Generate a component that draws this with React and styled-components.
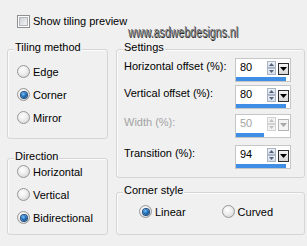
import React from "react";
import styled, { createGlobalStyle, css } from "styled-components";

const Global = createGlobalStyle`
  html, body { margin: 0; padding: 0; background: #f0f0f0; }
  body { font-family: "Liberation Sans", Arial, sans-serif; font-size: 11px; color: #000; }
`;

const Page = styled.div`
  position: relative;
  width: 307px;
  height: 246px;
  box-sizing: border-box;
  padding-top: 15px;
  overflow: hidden;
  background: #f0f0f0;
`;

const CheckRow = styled.label`
  display: flex;
  align-items: center;
  gap: 3px;
  height: 13px;
  padding-left: 17px;
  line-height: 13px;
`;

const CheckBox = styled.span`
  flex: none;
  width: 13px;
  height: 13px;
  box-sizing: border-box;
  border: 1px solid #8e8f8f;
  background: linear-gradient(135deg, #c4c8ce 0%, #e6e8eb 60%, #f7f7f7 100%);
  box-shadow: inset 0 0 0 1px #fff, inset 0 0 0 2px #b1b5bb;
`;

const Watermark = styled.div`
  position: absolute;
  left: 128px;
  top: 25px;
  font-size: 14px;
  line-height: 14px;
  color: #7a7a7a;
  text-shadow: 1px 1px 0 #2a2a2a;
  transform: scaleX(0.76);
  transform-origin: left top;
  white-space: nowrap;
`;

const Columns = styled.div`
  display: flex;
  gap: 8px;
  padding-left: 7px;
  margin-top: 21px;
`;

const Column = styled.div`
  display: flex;
  flex-direction: column;
  width: ${(p) => p.$w}px;
`;

const Group = styled.div`
  position: relative;
  box-sizing: border-box;
  height: ${(p) => p.$h}px;
  margin-top: ${(p) => p.$mt || 0}px;
  padding: ${(p) => p.$pad};
  border: 1px solid #d5d5d5;
  border-radius: 3px;
  box-shadow: inset 1px 1px 0 #fcfcfc;
`;

const GroupTitle = styled.span`
  position: absolute;
  top: -10px;
  left: 6px;
  padding: 0 1px;
  line-height: 14px;
  background: #f0f0f0;
  white-space: nowrap;
`;

const RadioList = styled.div`
  display: flex;
  flex-direction: column;
`;

const RadioRowLine = styled.div`
  display: flex;
  gap: 36px;
`;

const RadioItem = styled.label`
  display: flex;
  align-items: center;
  gap: 3px;
  height: 23px;
  white-space: nowrap;
`;

const RadioDot = styled.span`
  position: relative;
  flex: none;
  width: 13px;
  height: 13px;
  box-sizing: border-box;
  border-radius: 50%;
  border: 1px solid #979797;
  background: radial-gradient(circle at 40% 35%, #ffffff 0%, #ededed 45%, #cbcbcb 100%);
  ${(p) =>
    p.$checked &&
    css`
      &::after {
        content: "";
        position: absolute;
        left: 2.5px;
        top: 2.5px;
        width: 6px;
        height: 6px;
        border-radius: 50%;
        background: radial-gradient(circle at 40% 35%, #7fc4f4 0%, #1f6fbd 45%, #0c3464 100%);
        box-shadow: 0 0 0 1px #24507e;
      }
    `}
`;

const SettingRow = styled.div`
  display: flex;
  align-items: flex-start;
  margin-top: ${(p) => p.$mt}px;
`;

const SettingLabel = styled.span`
  width: 111px;
  line-height: 17px;
  color: ${(p) => (p.$disabled ? "#a3a3a3" : "#000")};
  white-space: nowrap;
`;

const Spin = styled.div`
  display: flex;
  flex-direction: column;
  width: 56px;
  height: 24px;
  box-sizing: border-box;
  border: 1px solid #c6c6c6;
  background: #fff;
`;

const SpinTop = styled.div`
  display: flex;
  height: 17px;
`;

const SpinValue = styled.span`
  width: 31px;
  box-sizing: border-box;
  padding-left: 4px;
  line-height: 17px;
  color: ${(p) => (p.$disabled ? "#a3a3a3" : "#000")};
`;

const Arrows = styled.div`
  display: flex;
  flex-direction: column;
  width: 9px;
  margin-top: 2px;
`;

const ArrowBtn = styled.span`
  display: flex;
  align-items: center;
  justify-content: center;
  height: 7px;
  box-sizing: border-box;
  border: 1px solid ${(p) => (p.$disabled ? "#d2d2d2" : "#aab5c6")};
  background: ${(p) =>
    p.$disabled ? "#f2f2f2" : "linear-gradient(#eef2f7, #d5dce7)"};
`;

const DropBtn = styled.span`
  display: flex;
  align-items: center;
  justify-content: center;
  width: 11px;
  height: 12px;
  margin: 4px 0 0 2px;
  box-sizing: border-box;
  border: 1px solid ${(p) => (p.$disabled ? "#b4b4b4" : "#2e2e2e")};
  background: ${(p) =>
    p.$disabled ? "#f4f4f4" : "linear-gradient(#f6f6f6, #d6d6d6)"};
`;

const BarTrack = styled.div`
  width: 50px;
  height: 4px;
  margin-top: 1px;
`;

const BarFill = styled.div`
  width: ${(p) => p.$fill * 100}%;
  height: 100%;
  background: #3d8ee4;
`;

const Tri = ({ dir, color, w, h }) => (
  <svg width={w} height={h} viewBox={`0 0 ${w} ${h}`}>
    {dir === "up" ? (
      <polygon points={`0,${h} ${w},${h} ${w / 2},0`} fill={color} />
    ) : (
      <polygon points={`0,0 ${w},0 ${w / 2},${h}`} fill={color} />
    )}
  </svg>
);

function SpinControl({ value, fill, disabled }) {
  const arrowColor = disabled ? "#c0c0c0" : "#52607a";
  return (
    <Spin>
      <SpinTop>
        <SpinValue $disabled={disabled}>{value}</SpinValue>
        <Arrows>
          <ArrowBtn $disabled={disabled}>
            <Tri dir="up" color={arrowColor} w={5} h={3} />
          </ArrowBtn>
          <ArrowBtn $disabled={disabled}>
            <Tri dir="down" color={arrowColor} w={5} h={3} />
          </ArrowBtn>
        </Arrows>
        <DropBtn $disabled={disabled}>
          <Tri dir="down" color={disabled ? "#a8a8a8" : "#000"} w={7} h={4} />
        </DropBtn>
      </SpinTop>
      <BarTrack>
        <BarFill $fill={fill} />
      </BarTrack>
    </Spin>
  );
}

const Radio = ({ label, checked }) => (
  <RadioItem>
    <RadioDot $checked={checked} />
    {label}
  </RadioItem>
);

const settings = [
  { label: "Horizontal offset (%):", value: "80", fill: 1, mt: 0 },
  { label: "Vertical offset (%):", value: "80", fill: 1, mt: 3 },
  { label: "Width (%):", value: "50", fill: 0.56, mt: 5, disabled: true },
  { label: "Transition (%):", value: "94", fill: 1, mt: 7 },
];

export default function App() {
  return (
    <Page>
      <Global />
      <CheckRow>
        <CheckBox />
        Show tiling preview
      </CheckRow>
      <Watermark>www.asdwebdesigns.nl</Watermark>
      <Columns>
        <Column $w={101}>
          <Group $h={90} $pad="10px 0 0 9px">
            <GroupTitle>Tiling method</GroupTitle>
            <RadioList>
              <Radio label="Edge" />
              <Radio label="Corner" checked />
              <Radio label="Mirror" />
            </RadioList>
          </Group>
          <Group $h={77} $mt={19} $pad="1px 0 0 9px">
            <GroupTitle>Direction</GroupTitle>
            <RadioList>
              <Radio label="Horizontal" />
              <Radio label="Vertical" />
              <Radio label="Bidirectional" checked />
            </RadioList>
          </Group>
        </Column>
        <Column $w={189}>
          <Group $h={129} $pad="8px 0 0 7px">
            <GroupTitle>Settings</GroupTitle>
            {settings.map((s) => (
              <SettingRow key={s.label} $mt={s.mt}>
                <SettingLabel $disabled={s.disabled}>{s.label}</SettingLabel>
                <SpinControl value={s.value} fill={s.fill} disabled={s.disabled} />
              </SettingRow>
            ))}
          </Group>
          <Group $h={43} $mt={14} $pad="7px 0 0 22px">
            <GroupTitle>Corner style</GroupTitle>
            <RadioRowLine>
              <Radio label="Linear" checked />
              <Radio label="Curved" />
            </RadioRowLine>
          </Group>
        </Column>
      </Columns>
    </Page>
  );
}
